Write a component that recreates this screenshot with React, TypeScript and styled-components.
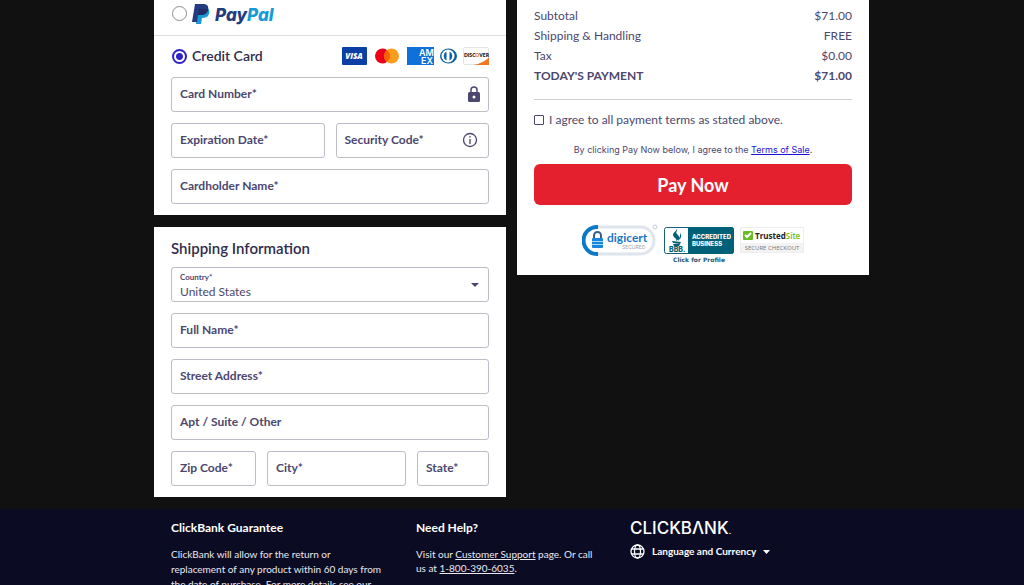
import React from 'react';
import styled, { createGlobalStyle, css } from 'styled-components';

const ink = '#4c476f';
const dark = '#2e2c4d';
const line = '#bdbcc8';

const GlobalStyle = createGlobalStyle`
  *, *::before, *::after { box-sizing: border-box; }
  html { scrollbar-width: none; background: #111; }
  body {
    margin: 0;
    background: #111;
    color: ${ink};
    font-family: Lato, "Liberation Sans", sans-serif;
    font-size: 12px;
    line-height: 20px;
  }
  button, input, select { font: inherit; color: inherit; }
`;

const Columns = styled.main`
  display: grid;
  grid-template-columns: repeat(2, minmax(0, 352px));
  gap: 11px;
  align-items: start;
  max-width: 716px;
  margin: 0 auto 12px;
`;

const Stack = styled.div`
  display: flex;
  flex-direction: column;
  gap: 12px;
`;

const Panel = styled.section`
  background: #fff;
`;

const PayPalRow = styled.div`
  display: flex;
  align-items: center;
  height: 36px;
  padding: 0 17px 8px;
  border-bottom: 1px solid #dcdce2;
`;

const FormBody = styled.div`
  display: flex;
  flex-direction: column;
  gap: 11px;
  padding: 10px 17px 11px;
`;

const MethodRow = styled.div`
  display: flex;
  align-items: center;
  justify-content: space-between;
  height: 20px;
`;

const Method = styled.label`
  display: flex;
  align-items: center;
  gap: 4px;
  color: ${dark};
  font-size: 14px;
  font-weight: 600;
`;

const Radio = styled.input`
  appearance: none;
  width: 15px;
  height: 15px;
  margin: 0 1px;
  border: 1px solid #8c8c92;
  border-radius: 50%;
  &:checked {
    border: 2px solid #2f22c4;
    background: radial-gradient(circle, #2f22c4 3px, #fff 4px);
  }
`;

const Cards = styled.div`
  display: flex;
  align-items: center;
  gap: 6px;
`;

const Row = styled.div<{ $cols: string }>`
  display: grid;
  grid-template-columns: ${(p) => p.$cols};
  gap: 11px;
`;

const boxed = css`
  height: 35px;
  padding: 0 8px;
  border: 1px solid ${line};
  border-radius: 3px;
  background: #fff;
`;

const FieldBox = styled.label`
  ${boxed}
  display: flex;
  align-items: center;
  min-width: 0;
  padding-bottom: 1px;
  font-weight: 700;
  white-space: nowrap;
  svg { flex: none; }
`;

const FieldInput = styled.input`
  flex: 1;
  min-width: 0;
  width: 0;
  padding: 0;
  border: 0;
  outline: 0;
  background: none;
`;

const SelectBox = styled.label`
  ${boxed}
  display: grid;
  grid-template-columns: 1fr auto;
  grid-template-rows: 10px 18px;
  align-items: center;
  padding-top: 4px;
`;

const SelectCaption = styled.span`
  grid-column: 1;
  grid-row: 1;
  font-size: 8px;
  line-height: 10px;
  font-weight: 700;
`;

const Select = styled.select`
  appearance: none;
  grid-column: 1 / -1;
  grid-row: 2;
  width: 100%;
  height: 18px;
  padding: 0;
  border: 0;
  outline: 0;
  background: none;
`;

const SelectArrow = styled.svg`
  grid-column: 2;
  grid-row: 1 / 3;
  margin: 0 1px 2px 0;
`;

const Heading = styled.h2`
  margin: 0;
  color: ${dark};
  font-size: 15px;
  line-height: 20px;
  font-weight: 600;
`;

const ShippingBody = styled(FormBody)`
  padding-top: 11px;
  ${Heading} { margin-bottom: -2px; }
`;

const SummaryBody = styled.div`
  padding: 6px 17px 11px;
`;

const Totals = styled.table`
  width: 100%;
  border-collapse: collapse;
  th, td { padding: 0; height: 20px; font-weight: 400; text-align: left; }
  td { text-align: right; }
  tr:last-child > * { font-weight: 700; }
`;

const Rule = styled.hr`
  height: 1px;
  margin: 13px 0 10px;
  border: 0;
  background: #cfced6;
`;

const Agree = styled.label`
  display: flex;
  align-items: center;
  gap: 5px;
`;

const Checkbox = styled.input`
  appearance: none;
  width: 10px;
  height: 10px;
  margin: 0;
  border: 1px solid ${ink};
  border-radius: 1px;
  &:checked { background: ${ink}; }
`;

const Terms = styled.p`
  margin: 10px 0 4px;
  font-family: Inter, sans-serif;
  font-size: 9px;
  text-align: center;
  a { color: #1c11d8; }
`;

const PayButton = styled.button`
  display: block;
  width: 100%;
  height: 41px;
  padding: 0;
  border: 0;
  border-radius: 6px;
  background: #e5202e;
  color: #fff;
  font-size: 18px;
  font-weight: 700;
`;

const Badges = styled.div`
  display: flex;
  justify-content: center;
  align-items: flex-start;
  gap: 6px;
  margin-top: 19px;
`;

const Footer = styled.footer`
  background: #0b0c24;
  color: #e8e8f0;
`;

const FooterInner = styled.div`
  display: grid;
  grid-template-columns: 221px 190px 1fr;
  column-gap: 24px;
  max-width: 716px;
  margin: 0 auto;
  padding: 9px 17px 0;
  font-size: 10px;
  line-height: 15px;
  p { margin: 9px 0 0; }
  a { color: inherit; }
`;

const Help = styled.div`
  p { line-height: 14px; }
`;

const FooterTitle = styled.h3`
  margin: 0;
  color: #fff;
  font-size: 12px;
  line-height: 20px;
  font-weight: 700;
`;

const LogoLink = styled.a`
  display: block;
  height: 20px;
`;

const LanguageButton = styled.button`
  display: flex;
  align-items: center;
  gap: 7px;
  margin-top: 6px;
  padding: 0;
  border: 0;
  background: none;
  color: #fff;
  font-weight: 700;
`;

function Field({ label, type = 'text', children }: { label: string; type?: string; children?: React.ReactNode }) {
  return (
    <FieldBox>
      {label}
      <FieldInput type={type} />
      {children}
    </FieldBox>
  );
}

const PayPalLogo = () => (
  <svg width="88" height="24" viewBox="0 0 88 24" role="img" aria-label="PayPal">
    <path d="M5 8 8 5h6c3 1 4 4 3 7-1 3-4 4-7 4l-1 6H4z" fill="#179bd7" />
    <path d="M3 2h8c4 0 6 2 5 6-1 4-4 5-8 5H6l-1 7H0z" fill="#253b80" />
    <path d="m6 13 1-6h6c2 0 3 1 3 1-1 4-4 5-8 5z" fill="#222d65" />
    <text x="23" y="19" fontFamily="Inter, sans-serif" fontSize="17" fontWeight="800" fontStyle="italic" fill="#253b80">
      Pay<tspan fill="#179bd7">Pal</tspan>
    </text>
  </svg>
);

const CardLogos = () => (
  <Cards>
    <svg width="25" height="18" role="img" aria-label="Visa">
      <rect width="25" height="18" rx="1" fill="#0b3fa5" />
      <text x="12" y="12" textAnchor="middle" fontFamily="Open Sans, sans-serif" fontSize="8" fontWeight="800" fontStyle="italic" fill="#fff">VISA</text>
    </svg>
    <svg width="28" height="18" role="img" aria-label="Mastercard">
      <circle cx="9.500" cy="9" r="7.500" fill="#eb001b" />
      <circle cx="18.500" cy="9" r="7.500" fill="#f79e1b" />
      <path d="M14 3a7.500 7.500 0 0 1 0 12 7.500 7.500 0 0 1 0-12z" fill="#ff5f00" />
    </svg>
    <svg width="27" height="18" role="img" aria-label="American Express">
      <rect width="27" height="18" fill="#0f70d8" />
      <g fontFamily="Inter, sans-serif" fontSize="9" fontWeight="600" fill="#fff">
        <text x="12" y="9">AM</text>
        <text x="14" y="17">EX</text>
      </g>
    </svg>
    <svg width="17" height="18" role="img" aria-label="Diners Club">
      <ellipse cx="8.500" cy="9" rx="8.500" ry="7.500" fill="#0f5f9f" />
      <circle cx="8" cy="9" r="6.500" fill="#fff" />
      <path d="M6.500 4.500a5 5 0 0 0 0 9zM9.500 4.500a5 5 0 0 1 0 9z" fill="#0f5f9f" />
    </svg>
    <svg width="26" height="18" role="img" aria-label="Discover">
      <rect x=".5" y=".5" width="25" height="17" rx="1" fill="#fff" stroke="#e4e4e4" />
      <path d="M26 10.500V18H10c7-1 12-4 16-7.500z" fill="#f27822" />
      <text x="1" y="10" fontFamily="Lato, sans-serif" fontSize="5" fontWeight="800" fill="#222">DISC<tspan fill="#f27822">O</tspan>VER</text>
    </svg>
  </Cards>
);

const DigicertBadge = () => (
  <svg width="76" height="32" viewBox="0 0 76 32" role="img" aria-label="DigiCert Secured">
    <rect x="2" y="3" width="70" height="27" rx="13.500" fill="#fff" stroke="#dfe5ec" strokeWidth="3" />
    <path d="M16 3h-1a13.500 13.500 0 0 0 0 27h1" fill="none" stroke="#0a7ac8" strokeWidth="4" />
    <circle cx="73" cy="3" r="2" fill="#fff" stroke="#c7c9ce" />
    <path d="M12 14v-2.500a3.500 3.500 0 0 1 7 0V14" fill="none" stroke="#3a5f85" strokeWidth="2" />
    <rect x="10" y="14" width="11" height="10" rx="1" fill="#1687dc" />
    <path d="M10 17.500h11M10 20.500h11" stroke="#a8d6f6" />
    <text x="25" y="18" fontFamily="Lato, sans-serif" fontSize="12" fontWeight="700" fill="#1c76c7">digicert</text>
    <text x="40" y="25" fontFamily="Inter, sans-serif" fontSize="5" fill="#9fa4aa">SECURED</text>
  </svg>
);

const BbbBadge = () => (
  <svg width="70" height="40" viewBox="0 0 70 40" role="img" aria-label="BBB Accredited Business">
    <rect x=".5" y="3.500" width="69" height="26" rx="2" fill="#fff" stroke="#156078" />
    <path d="M24 3h43a3 3 0 0 1 3 3v21a3 3 0 0 1-3 3H24z" fill="#006078" />
    <path d="M13 5c-1 3-6 4-3 8 1 1 3 2 2 4 5-3 3-5 1-7s1-3 0-5zM16 9c3 3 0 6-2 8 0-3 3-4 2-8zM8 17l9 1-1 2-7-1zM9 20h7l-1 2h-5z" fill="#006078" />
    <g fontFamily="Inter, sans-serif" fontWeight="800">
      <text x="5" y="28" fontSize="7" fill="#006078">BBB.</text>
      <text x="28" y="15" fontSize="6" fill="#fff">ACCREDITED</text>
      <text x="28" y="22" fontSize="6" fill="#fff">BUSINESS</text>
    </g>
    <text x="35" y="38" textAnchor="middle" fontFamily="DejaVu Sans, sans-serif" fontSize="6" fontWeight="700" fill="#1c5873">Click for Profile</text>
  </svg>
);

const TrustedBadge = () => (
  <svg width="64" height="32" viewBox="0 0 64 32" role="img" aria-label="TrustedSite Secure Checkout">
    <rect x=".5" y="3.500" width="63" height="25" fill="#fff" stroke="#eee" />
    <rect x="1" y="19" width="62" height="9" fill="#f3f3f3" />
    <rect x="3" y="7" width="10" height="9" rx="1" fill="#68bd22" />
    <path d="m5 11 2 2 4-4" fill="none" stroke="#fff" strokeWidth="2" />
    <text x="15" y="15" fontFamily="Open Sans, sans-serif" fontSize="8" fontWeight="700" fill="#222">Trusted<tspan fill="#68bd22" fontWeight="600">Site</tspan></text>
    <text x="32" y="26" textAnchor="middle" fontFamily="Open Sans, sans-serif" fontSize="6" fill="#777">SECURE CHECKOUT</text>
  </svg>
);

export default function App() {
  return (
    <>
      <GlobalStyle />
      <Columns>
        <Stack>
          <Panel>
            <PayPalRow>
              <Method>
                <Radio type="radio" name="method" />
                <PayPalLogo />
              </Method>
            </PayPalRow>
            <FormBody>
              <MethodRow>
                <Method>
                  <Radio type="radio" name="method" defaultChecked />
                  Credit Card
                </Method>
                <CardLogos />
              </MethodRow>
              <Field label="Card Number*">
                <svg width="12" height="16" viewBox="0 0 12 16">
                  <path d="M3 7V4a3 3 0 0 1 6 0v3" fill="none" stroke={ink} strokeWidth="1.500" />
                  <rect y="6" width="12" height="10" rx="1.500" fill={ink} />
                  <circle cx="6" cy="11" r="1.500" fill="#fff" />
                </svg>
              </Field>
              <Row $cols="1fr 1fr">
                <Field label="Expiration Date*" />
                <Field label="Security Code*">
                  <svg width="20" height="16" viewBox="0 0 20 16">
                    <g fill="none" stroke={ink} strokeWidth="1.300">
                      <circle cx="10" cy="8" r="6.500" />
                      <path d="M10 7v5M10 4v1.500" />
                    </g>
                  </svg>
                </Field>
              </Row>
              <Field label="Cardholder Name*" />
            </FormBody>
          </Panel>
          <Panel>
            <ShippingBody>
              <Heading>Shipping Information</Heading>
              <SelectBox>
                <SelectCaption>Country*</SelectCaption>
                <Select defaultValue="US">
                  <option value="US">United States</option>
                </Select>
                <SelectArrow width="8" height="4" viewBox="0 0 8 4">
                  <path d="M0 0h8L4 4z" fill={ink} />
                </SelectArrow>
              </SelectBox>
              <Field label="Full Name*" />
              <Field label="Street Address*" />
              <Field label="Apt / Suite / Other" />
              <Row $cols="85fr 139fr 72fr">
                <Field label="Zip Code*" />
                <Field label="City*" />
                <Field label="State*" />
              </Row>
            </ShippingBody>
          </Panel>
        </Stack>
        <Panel>
          <SummaryBody>
            <Totals>
              <tbody>
                <tr><th scope="row">Subtotal</th><td>$71.00</td></tr>
                <tr><th scope="row">Shipping &amp; Handling</th><td>FREE</td></tr>
                <tr><th scope="row">Tax</th><td>$0.00</td></tr>
                <tr><th scope="row">TODAY'S PAYMENT</th><td>$71.00</td></tr>
              </tbody>
            </Totals>
            <Rule />
            <Agree>
              <Checkbox type="checkbox" />
              I agree to all payment terms as stated above.
            </Agree>
            <Terms>
              By clicking Pay Now below, I agree to the <a href="#terms">Terms of Sale</a>.
            </Terms>
            <PayButton type="button">Pay Now</PayButton>
            <Badges>
              <DigicertBadge />
              <BbbBadge />
              <TrustedBadge />
            </Badges>
          </SummaryBody>
        </Panel>
      </Columns>
      <Footer>
        <FooterInner>
          <div>
            <FooterTitle>ClickBank Guarantee</FooterTitle>
            <p>
              ClickBank will allow for the return or
              <br />
              replacement of any product within 60 days from
              <br />
              the date of purchase. For more details see our
            </p>
          </div>
          <Help>
            <FooterTitle>Need Help?</FooterTitle>
            <p>
              Visit our <a href="#support">Customer Support</a> page. Or call
              <br />
              us at <a href="tel:18003906035">1-800-390-6035</a>.
            </p>
          </Help>
          <div>
            <LogoLink href="#home">
              <svg width="120" height="20" viewBox="0 0 120 20" role="img" aria-label="ClickBank">
                <text x="0" y="16" fontFamily="Inter, sans-serif" fontSize="17" fontWeight="500" fill="#fff">CLICKBΛNK<tspan fontSize="8">.</tspan></text>
              </svg>
            </LogoLink>
            <LanguageButton type="button">
              <svg width="15" height="15" viewBox="0 0 15 15" fill="none" stroke="#fff" strokeWidth="1.300">
                <circle cx="7.500" cy="7.500" r="6.500" />
                <ellipse cx="7.500" cy="7.500" rx="3" ry="6.500" />
                <path d="M1.500 5h12M1.500 10h12" />
              </svg>
              Language and Currency
              <svg width="7" height="4" viewBox="0 0 7 4"><path d="M0 0h7L3.500 4z" fill="#fff" /></svg>
            </LanguageButton>
          </div>
        </FooterInner>
      </Footer>
    </>
  );
}
